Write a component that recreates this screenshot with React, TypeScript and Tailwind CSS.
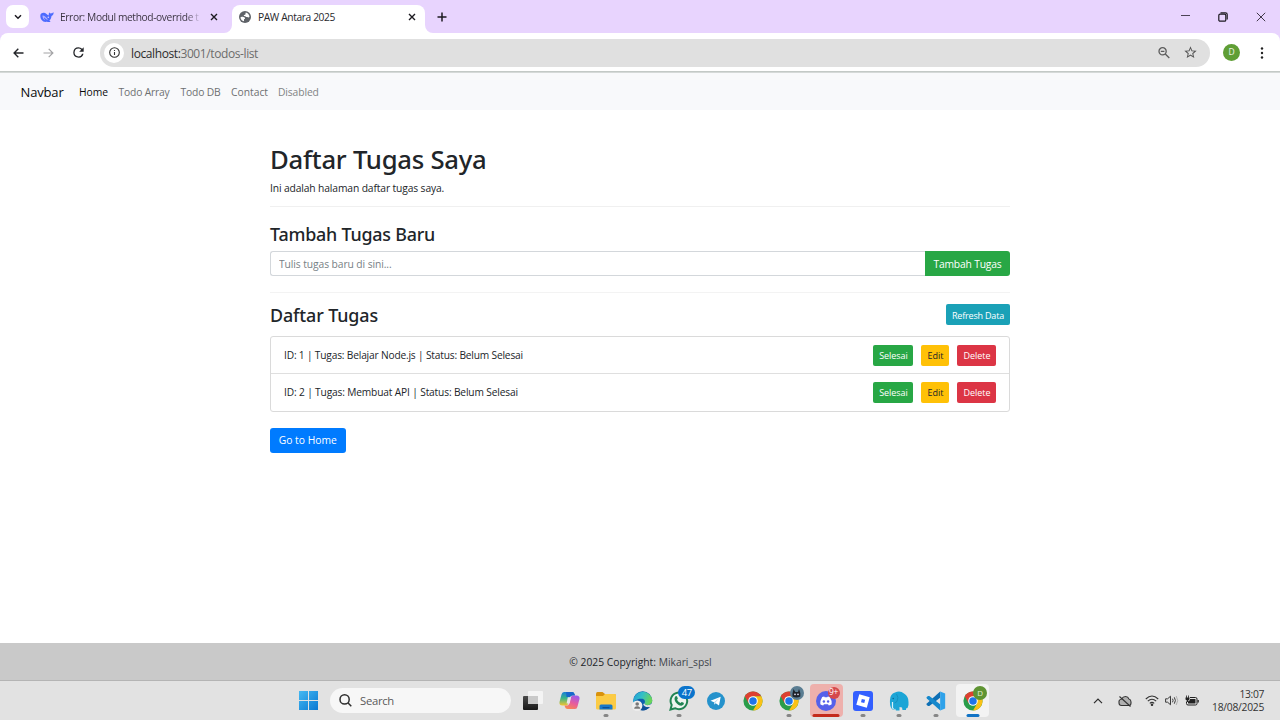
import type { ReactNode } from "react";

function ChromeLogo({ size = 20 }: { size?: number }) {
  return (
    <svg width={size} height={size} viewBox="0 0 48 48">
      <circle cx="24" cy="24" r="23" fill="#2a9d4a" />
      <path d="M4.1 12.5A23 23 0 0 1 43.9 12.5H24L14 29.8Z" fill="#dd4031" />
      <path d="M43.9 12.5A23 23 0 0 1 24 47L34 29.8 24 13V12.5Z" fill="#fbc116" />
      <circle cx="24" cy="24" r="11.5" fill="#fff" />
      <circle cx="24" cy="24" r="9" fill="#1f74e8" />
    </svg>
  );
}

function TaskItem({ children, mark, className = "" }: { children: ReactNode; mark?: string; className?: string }) {
  return (
    <div className={`relative flex h-[33px] w-[33px] items-center justify-center rounded-[4px] ${className}`}>
      {children}
      {mark && <span className={`absolute bottom-0 left-1/2 h-[3px] -translate-x-1/2 rounded-full ${mark}`} />}
    </div>
  );
}

const running = "w-[5px] bg-[#868686]";

function CloseIcon() {
  return (
    <svg width="8" height="8" viewBox="0 0 8 8" stroke="#1c1a20" strokeWidth="1.4">
      <path d="M1 1 7 7M7 1 1 7" />
    </svg>
  );
}

function TabBar() {
  return (
    <header className="flex h-[33px] items-start bg-[#e8d4fe]">
      <div className="ml-[6px] mt-[5px] flex h-[23px] w-[23px] items-center justify-center rounded-[7px] bg-white">
        <svg width="8" height="6" viewBox="0 0 8 6" fill="none" stroke="#1c1a20" strokeWidth="1.5">
          <path d="M1 1.2 4 4.2 7 1.2" />
        </svg>
      </div>
      <div className="ml-[11px] mt-[6px] flex h-[22px] w-[180px] items-center">
        <svg width="14" height="12" viewBox="0 0 14 12" fill="#4d6bfe">
          <path d="M.3 5C.2 2.6 2.2 1.5 4.2 1.8 6.3 2.1 7 3.7 8.4 4.6 9 4.3 8.5 2.5 9.3 1.3 9.7 2.6 10.6 2.5 11.5 2.3 12.5 2.1 12.9 1.5 13.6 1.2 13.7 3.3 12.8 4.5 11.5 4.9 11.3 7 10.5 8.4 9.4 9.4L10.6 10.8C9 11.5 7.5 10.6 6.5 10.8 2.8 11.5.4 8.2.3 5Z" />
          <path d="M2.5 4.5C4.5 4 6.5 6.5 8 8.8 6 8.3 5 7 4.2 6.4 3.6 7 4.5 8.5 5.5 9.2 3.5 9 2.3 6.5 2.5 4.5Z" fill="#b5b0ff" />
          <circle cx="8.3" cy="6.3" r=".8" fill="#dfd0ff" />
        </svg>
        <span className="ml-[6px] w-[140px] overflow-hidden whitespace-nowrap bg-linear-to-r from-[#38313f] from-90% to-[#38313f]/10 bg-clip-text pt-[1px] text-[10.25px] tracking-[-0.39px] text-transparent">
          Error: Modul method-override t
        </span>
        <span className="ml-[9.5px] flex"><CloseIcon /></span>
      </div>
      <div className="relative ml-[12px] mt-[5px] flex h-[28px] w-[193px] items-center rounded-t-[8px] bg-white px-[7px] pb-[4px]">
        <svg className="absolute bottom-0 -left-[8px]" width="8" height="8" viewBox="0 0 8 8" fill="#fff"><path d="M8 0V8H0A8 8 0 0 0 8 0Z" /></svg>
        <svg className="absolute bottom-0 -right-[8px]" width="8" height="8" viewBox="0 0 8 8" fill="#fff"><path d="M0 0V8H8A8 8 0 0 1 0 0Z" /></svg>
        <svg width="12" height="12" viewBox="0 0 24 24">
          <circle cx="12" cy="12" r="12" fill="#5f6368" />
          <path d="M3 12.5C4 11 7 11 9 12 11 12.5 12.5 13.5 12 15.5L10 16.5V20.5C6 20 3 17 3 12.5ZM13.5 3.2C17.5 3.8 20.8 7.5 21 11.5 20 13.5 18 13 16.5 12L14.5 12 12.5 10.5 10 10 9.5 8 12.5 7.5Z" fill="#fff" />
        </svg>
        <span className="ml-[7px] flex-1 whitespace-nowrap pt-[1px] text-[10.25px] tracking-[-0.39px] text-[#28282c]">PAW Antara 2025</span>
        <span className="mr-[2px] flex"><CloseIcon /></span>
      </div>
      <svg className="ml-[12px] mt-[12px]" width="10" height="10" viewBox="0 0 10 10" stroke="#1c1a20" strokeWidth="1.5"><path d="M5 .5V9.5M.5 5H9.5" /></svg>
      <div className="ml-auto mr-[14px] flex h-[33px] items-center gap-[28px]">
        <svg className="-mt-[2px]" width="9" height="9" viewBox="0 0 9 9" stroke="#4c4355" strokeWidth="1"><path d="M0 4.5H9" /></svg>
        <svg width="10" height="10" viewBox="0 0 10 10" fill="none" stroke="#1c1a20" strokeWidth="1.2">
          <rect x=".8" y="2.2" width="7" height="7" rx="1.3" />
          <path d="M2.5 .8H7.5Q9.2 .8 9.2 2.5V7.5" />
        </svg>
        <svg width="10" height="10" viewBox="0 0 10 10" stroke="#2c2633" strokeWidth=".9"><path d="M.8 .8 9.2 9.2M9.2 .8 .8 9.2" /></svg>
      </div>
    </header>
  );
}

function Toolbar() {
  return (
    <div className="bg-[#e8d4fe]">
      <div className="flex h-[39px] items-center rounded-t-[8px] border-b border-[#c3c9c6] bg-white pl-[13px] pr-[16px] pt-[1px]">
        <svg width="11" height="10" viewBox="0 0 11 10" fill="none" stroke="#24262a" strokeWidth="1.4"><path d="M10.5 5H1.3M5.3 .8 1.1 5 5.3 9.2" /></svg>
        <svg className="ml-[19px]" width="11" height="10" viewBox="0 0 11 10" fill="none" stroke="#a3a3a5" strokeWidth="1.2"><path d="M.5 5H9.7M5.7 .8 9.9 5 5.7 9.2" /></svg>
        <svg className="ml-[19px]" width="11" height="11" viewBox="3.5 3.5 17 17" fill="#24262a"><path d="M17.65 6.35A7.96 7.96 0 0 0 12 4a8 8 0 1 0 7.73 10h-2.08A6 6 0 1 1 12 6c1.66 0 3.14.69 4.22 1.78L13 11h7V4z" /></svg>
        <div className="ml-[16px] flex h-[28px] flex-1 items-center rounded-full bg-[#e0e0e0] pl-[4px] pr-[13px]">
          <div className="flex h-[20px] w-[20px] items-center justify-center rounded-full bg-white">
            <svg width="11" height="11" viewBox="0 0 11 11" fill="none" stroke="#333" strokeWidth="1.1"><circle cx="5.5" cy="5.5" r="4.8" /><path d="M5.5 4.9V8M5.5 2.9V4" /></svg>
          </div>
          <p className="ml-[7px] flex-1 whitespace-nowrap pt-[2px] text-[12px] tracking-[-0.4px] text-[#6c6c6c]"><span className="text-[#2c2c2c]">localhost:</span>3001/todos-list</p>
          <svg width="12" height="12" viewBox="0 0 12 12" fill="none" stroke="#5c5c5c" strokeWidth="1.3"><circle cx="4.6" cy="4.3" r="3.6" /><path d="M7.3 7 11.3 11M2.8 4.3H6.4" /></svg>
          <svg className="ml-[14px]" width="13" height="13" viewBox="1.5 1.5 21 21" fill="#565656"><path d="M22 9.24l-7.19-.62L12 2 9.19 8.63 2 9.24l5.46 4.73L5.82 21 12 17.27 18.18 21l-1.63-7.03L22 9.24zM12 15.4l-3.76 2.27 1-4.28-3.32-2.88 4.38-.38L12 6.1l1.71 4.04 4.38.38-3.32 2.88 1 4.28L12 15.4z" /></svg>
        </div>
        <div className="ml-[13px] flex h-[17px] w-[17px] items-center justify-center rounded-full bg-[#5f9e35] text-[8.5px] text-white/90">D</div>
        <svg className="ml-[20px]" width="4" height="12" viewBox="0 0 4 12" fill="#222"><circle cx="2" cy="1.5" r="1.2" /><circle cx="2" cy="6" r="1.2" /><circle cx="2" cy="10.5" r="1.2" /></svg>
      </div>
    </div>
  );
}

function Navbar() {
  return (
    <nav className="flex h-[38px] items-center whitespace-nowrap border-t border-[#d5d9d8] bg-[#f8f9fb] pl-[20.5px] pt-[2px] text-[10.3px] text-[#6e7072]">
      <span className="w-[58.5px] text-[13px] tracking-[-0.16px] text-[#0a0b0c]">Navbar</span>
      <span className="w-[39.5px] text-[#0a0b0c]">Home</span>
      <span className="w-[62px] tracking-[-0.18px]">Todo Array</span>
      <span className="w-[50.5px] tracking-[-0.16px]">Todo DB</span>
      <span className="w-[47px]">Contact</span>
      <span className="tracking-[-0.12px] text-[#828485]">Disabled</span>
    </nav>
  );
}

function TodoRow({ children }: { children: ReactNode }) {
  return (
    <li className="flex h-[36px] items-center border-[#dfdfdf] px-[13px] not-first:h-[38px] not-first:border-t">
      {children}
      <div className="ml-auto flex h-[21px] gap-[8px] text-[9px] leading-[22px]">
        <button className="w-[40px] rounded-[2px] bg-[#28a745] pl-[1px] tracking-[-0.05px] text-white">Selesai</button>
        <button className="w-[28px] rounded-[2px] bg-[#ffc107] pl-[1px] text-[#212529]">Edit</button>
        <button className="w-[39px] rounded-[2px] bg-[#dc3545] pl-[1px] text-white">Delete</button>
      </div>
    </li>
  );
}

function Page() {
  return (
    <main className="mx-auto w-[740px] flex-1 pt-[34px] text-[10.3px] text-[#212529]">
      <h1 className="font-['Noto_Sans'] text-[25.7px] font-medium leading-[32px] tracking-[-0.26px]">Daftar Tugas Saya</h1>
      <p className="mt-[4px] leading-[16px] tracking-[-0.13px]">Ini adalah halaman daftar tugas saya.</p>
      <hr className="mt-[10px] border-[#f0f0f0]" />
      <h3 className="mt-[16px] font-['Noto_Sans'] text-[17.9px] font-medium leading-[22px] tracking-[-0.22px]">Tambah Tugas Baru</h3>
      <form className="mt-[6px] flex h-[25px]">
        <input className="min-w-0 flex-1 rounded-l-[3px] border border-r-0 border-[#d3d7db] pl-[8px] pt-[2px] tracking-[-0.09px] placeholder:text-[#787f85]" placeholder="Tulis tugas baru di sini..." />
        <button type="button" className="w-[85px] rounded-r-[3px] bg-[#28a745] pt-[2px] tracking-[-0.17px] text-white">Tambah Tugas</button>
      </form>
      <hr className="mt-[16px] border-[#f3f3f3]" />
      <div className="mt-[11px] flex h-[21px] items-center justify-between">
        <h3 className="font-['Noto_Sans'] text-[17.9px] font-medium leading-[22px] tracking-[-0.12px]">Daftar Tugas</h3>
        <button className="h-[21px] w-[64px] rounded-[2px] bg-[#1aa1b7] pt-[2px] text-[9px] tracking-[-0.18px] text-white">Refresh Data</button>
      </div>
      <ul className="mt-[11px] rounded-[3px] border border-[#dadada]">
        <TodoRow><span className="pt-[2px] text-[10.2px] tracking-[-0.18px]">ID: 1 | Tugas: Belajar Node.js | Status: Belum Selesai</span></TodoRow>
        <TodoRow><span className="pt-[1px] text-[10.2px] tracking-[-0.15px]">ID: 2 | Tugas: Membuat API | Status: Belum Selesai</span></TodoRow>
      </ul>
      <button className="mt-[16px] h-[25px] w-[75.5px] rounded-[3px] bg-[#007bff] pt-[1px] text-white">Go to Home</button>
    </main>
  );
}

function Taskbar() {
  return (
    <div className="flex h-[40px] items-center border-t border-[#b4b4b4] bg-[#e2e2e2] pl-[299px] pr-[16px]">
      <svg width="19" height="19" viewBox="0 0 19 19">
        <defs><linearGradient id="win" x1="0" y1="0" x2="1" y2="1"><stop stopColor="#45b9f2" /><stop offset="1" stopColor="#0a78d2" /></linearGradient></defs>
        <path d="M0 0H9V9H0ZM10 0H19V9H10ZM0 10H9V19H0ZM10 10H19V19H10Z" fill="url(#win)" />
      </svg>
      <div className="ml-[12px] flex h-[25px] w-[181px] items-center rounded-full bg-[#f7f7f7] pl-[9px]">
        <svg width="13" height="13" viewBox="0 0 13 13" fill="none" stroke="#2e2e2e" strokeWidth="1.5"><circle cx="5.6" cy="5.4" r="4.6" /><path d="M8.9 8.8 12.3 12.2" /></svg>
        <span className="ml-[8px] pt-[1px] text-[11.3px] tracking-[-0.3px] text-[#5a5a5a]">Search</span>
      </div>
      <div className="ml-[5px] flex gap-[3.7px]">
        <TaskItem>
          <svg width="20" height="19" viewBox="0 0 20 19">
            <defs><linearGradient id="tv" x1="0" y1="0" x2="0" y2="1"><stop stopColor="#4a4a4a" /><stop offset="1" stopColor="#181818" /></linearGradient></defs>
            <rect x="0" y="5" width="15" height="14" rx="1" fill="url(#tv)" />
            <rect x="5" y="0" width="15" height="13" rx="1" fill="#f4f4f4" />
            <rect x="5" y="5" width="10" height="8" fill="#c9c9c9" />
          </svg>
        </TaskItem>
        <TaskItem>
          <svg width="21" height="19" viewBox="0 0 21 19">
            <defs>
              <linearGradient id="cp1" x1="0" y1="0" x2="0" y2="1"><stop stopColor="#1a7fd8" /><stop offset=".45" stopColor="#38b58b" /><stop offset="1" stopColor="#f4c430" /></linearGradient>
              <linearGradient id="cp2" x1=".6" y1="0" x2=".2" y2="1"><stop stopColor="#a05ce8" /><stop offset=".5" stopColor="#e85c9c" /><stop offset="1" stopColor="#f98a50" /></linearGradient>
            </defs>
            <path d="M5 1H13Q15 1 15.5 3L16 4.5H13Q11.5 4.5 11 6L9 13Q8.5 14.5 7 14.5H3.5Q0 14.5 .5 11L2.5 3.5Q3 1 5 1Z" fill="url(#cp1)" />
            <path d="M7 1H13Q15 1 15.5 3L16 4.5H13Q11.5 4.5 11 6H7.5Z" fill="#1868cc" />
            <path d="M16 18H8.5Q6.5 18 6 16L5.5 14.5H8Q9.5 14.5 10 13L12 6Q12.5 4.5 14 4.5H17.5Q21 4.5 20.5 8L18.5 15.5Q18 18 16 18Z" fill="url(#cp2)" />
            <path d="M8.8 6.2H12L10.7 12.5H7.6Z" fill="#e8e6ea" />
          </svg>
        </TaskItem>
        <TaskItem mark={running}>
          <svg width="20" height="18" viewBox="0 0 20 18">
            <path d="M0 2Q0 0 1.5 0H6.5L9 2H18.5Q20 2 20 3.5V8H0Z" fill="#d9920d" />
            <path d="M0 4H7L9 2H18.5Q20 2 20 3.5V16Q20 17.5 18.5 17.5H1.5Q0 17.5 0 16Z" fill="#fbcb45" />
            <path d="M3.5 17.5V14Q3.5 12.5 5 12.5H15Q16.5 12.5 16.5 14V17.5Z" fill="#1879c8" />
            <path d="M6.5 15H13.5V16.3H6.5Z" fill="#0d4f93" />
          </svg>
        </TaskItem>
        <TaskItem>
          <svg width="21" height="20" viewBox="0 0 21 20">
            <defs>
              <linearGradient id="ed" x1="0" y1="0" x2="1" y2=".3"><stop stopColor="#219bd8" /><stop offset=".5" stopColor="#33bfc7" /><stop offset="1" stopColor="#68d45c" /></linearGradient>
            </defs>
            <circle cx="10.7" cy="9.7" r="9.5" fill="#0d5fae" />
            <path d="M1.2 10A9.6 9.6 0 0 1 20.3 9C20.5 12.5 17.5 14.2 15 14 12.8 13.8 12 12.8 12.8 11.5 13.5 9.5 12 7.8 9.5 7.8 5 7.5 2 10 1.2 13Z" fill="url(#ed)" />
            <path d="M12.5 12.5C13 14.5 17 15 20.5 12L21 16 18 16.2C14 16.8 11.5 15 11.2 13Z" fill="#e2e2e2" />
            <path d="M9.5 9.5C8 12.5 10 17.5 17.8 16A9.5 9.5 0 0 1 7 18.5Z" fill="#0f4f96" />
            <circle cx="5.2" cy="14.8" r="5.2" fill="#ededed" />
            <circle cx="5.2" cy="13" r="1.8" fill="#777" /><path d="M2.2 17.8Q2.2 15.2 5.2 15.2T8.2 17.8Z" fill="#777" />
          </svg>
        </TaskItem>
        <TaskItem mark={running}>
          <svg width="20" height="20" viewBox="0 0 20 20">
            <path d="M1.5 18.5 2.7 14A8.3 8.3 0 1 1 6 17.2Z" fill="#eef4f0" stroke="#218453" strokeWidth="2" />
            <path d="M6.5 5.3Q7.5 4.7 8 5.5L8.8 7.3Q8.9 8 8 8.7 9.2 11 11.6 12 12.5 10.9 13 11.1L15 12.1Q15 14.5 12.5 14.7 9 14.5 6.5 11 4.5 7.5 6.5 5.3Z" fill="#218453" />
          </svg>
          <span className="absolute right-[0.5px] top-[2px] flex h-[13px] w-[17px] items-center justify-center rounded-full bg-[#0a74cc] text-[9.5px] leading-none tracking-[-0.5px] text-white">47</span>
        </TaskItem>
        <TaskItem>
          <svg width="18" height="18" viewBox="0 0 18 18"><circle cx="9" cy="9" r="9" fill="#2592cc" /><path d="M3.5 8.8 13.7 4.7 12 13.5 8.7 11.2 7.2 12.6 7 10.2Z" fill="#fff" /><path d="M7 10.2 12 6.3 8.3 10.8 7.2 12.6Z" fill="#b5d6ec" /></svg>
        </TaskItem>
        <TaskItem><ChromeLogo /></TaskItem>
        <TaskItem mark={running}>
          <ChromeLogo />
          <svg className="absolute right-[2px] top-[2px]" width="14" height="14" viewBox="0 0 14 14">
            <circle cx="7" cy="7" r="7" fill="#5a7d92" />
            <path d="M2.500 10.500V7.500L3.500 3 5.300 6H8L9 3 10.300 7V10.500Q6.500 12.500 2.500 10.500Z" fill="#1d2228" />
            <circle cx="5" cy="8.3" r=".9" fill="#dde" /><circle cx="8" cy="8.3" r=".9" fill="#dde" />
          </svg>
        </TaskItem>
        <TaskItem className="bg-[#eeb0ac]" mark="w-[27px] bg-[#c42b1c]">
          <svg width="20" height="20" viewBox="0 0 20 20"><circle cx="10" cy="10" r="10" fill="#5661ea" /><path d="M6.2 6 8.2 5.5 8.7 6.3H11.3L11.8 5.5 13.8 6Q16 9.5 15.7 13.2 14.5 14.2 12.8 14.5L12 13.2H8L7.2 14.5Q5.5 14.2 4.3 13.2 4 9.5 6.2 6Z" fill="#fff" /><ellipse cx="7.9" cy="10.5" rx="1.2" ry="1.3" fill="#5661ea" /><ellipse cx="12.1" cy="10.5" rx="1.2" ry="1.3" fill="#5661ea" /></svg>
          <span className="absolute right-[3px] top-[2.5px] flex h-[12px] w-[12px] items-center justify-center rounded-full bg-[#d5484c] text-[8.5px] leading-none tracking-[-0.3px] text-white">9+</span>
        </TaskItem>
        <TaskItem mark={running}>
          <svg width="20" height="20" viewBox="0 0 20 20"><rect width="20" height="20" rx="3" fill="#335fff" /><path d="M6.3 3.3 16.7 6.2 13.8 16.7 3.3 13.8ZM8.8 7.9 8 11.2 11.3 12.1 12.1 8.8Z" fill="#fff" fillRule="evenodd" /></svg>
        </TaskItem>
        <TaskItem mark={running}>
          <svg width="20" height="20" viewBox="0 0 20 20">
            <path d="M1 9Q1 3 6 1.5 11 -1 15 2.5 19.5 5 19.5 11V14L18.5 17 17 17.5V19H13.5L13 16.5 10.5 16V19.5H7L6 17.5 5.5 18.5H3.5Q.5 16 1 9Z" fill="#1ca5d6" />
            <path d="M3.5 11V16.5Q3.7 17.8 4.7 17.5" fill="none" stroke="#d8f1f8" strokeWidth="1.2" /><path d="M7.5 3Q10 6 8 10.5L5.5 12" fill="none" stroke="#158bb8" strokeWidth=".8" /><circle cx="4.2" cy="7.5" r=".7" fill="#0d5f85" />
          </svg>
        </TaskItem>
        <TaskItem mark={running}>
          <svg width="20" height="20" viewBox="0 0 24 24">
            <path d="M17 .5V8L4 18H2.5L.5 16.5 1 15Z" fill="#0d6fb5" />
            <path d="M17 23.5V16L4 6H2.5L.5 7.5 1 9Z" fill="#1688cc" />
            <path d="M17 .5 23 3V21L17 23.5Z" fill="#2fa2ea" />
          </svg>
        </TaskItem>
        <TaskItem className="bg-[#f3f3f3]" mark="w-[13px] bg-[#1173c5]">
          <ChromeLogo />
          <span className="absolute right-[2px] top-[2px] flex h-[14px] w-[14px] items-center justify-center rounded-full bg-[#5f9433] text-[8px] leading-none text-[#e2eed6]">D</span>
        </TaskItem>
      </div>
      <svg className="ml-auto" width="10" height="6" viewBox="0 0 10 6" fill="none" stroke="#2c2c2c" strokeWidth="1.2"><path d="M1 5.2 5 1.2 9 5.2" /></svg>
      <svg className="ml-[15px]" width="14" height="12" viewBox="0 0 14 12" fill="none" stroke="#333" strokeWidth="1.1">
        <path d="M3.5 10.5Q1 10.5 1 8V6Q1.5 4.500 3.500 4 5 1.500 7.500 1.500 10 1.500 11 4 13 4.500 13 7V8Q13 10.500 11 10.500Z" fill="#b0b0b0" /><path d="M1.5 1.5 12.5 11.5" />
      </svg>
      <svg className="ml-[13px]" width="14" height="11" viewBox="0 0 14 11" fill="none" stroke="#333" strokeWidth="1.1">
        <path d="M.8 4Q7 -2 13.2 4M2.8 6.2Q7 2.3 11.2 6.2M4.8 8.3Q7 6.3 9.2 8.3" /><circle cx="7" cy="9.8" r=".7" fill="#333" />
      </svg>
      <svg className="ml-[6px]" width="14" height="11" viewBox="0 0 14 11" fill="none" stroke="#3a3a3a" strokeWidth="1">
        <path d="M.6 3.8H2.6L5.5 1.2V9.8L2.6 7.2H.6ZM7.5 3.7Q8.7 5.5 7.5 7.3M9.3 2.3Q11.5 5.5 9.3 8.7" /><path d="M11.2 1Q14.2 5.5 11.2 10" stroke="#b0b0b0" />
      </svg>
      <svg className="ml-[6px]" width="14" height="11" viewBox="0 0 14 11">
        <rect x="1.5" y="2.5" width="10.5" height="7.5" rx="1.5" fill="none" stroke="#222" />
        <rect x="3" y="4" width="7.5" height="4.5" rx=".5" fill="#222" />
        <path d="M12.5 5H13.8V7.5H12.5Z" fill="#222" />
        <path d="M0 0H5V5L3 6.5H0Z" fill="#e2e2e2" />
        <path d="M.5 2.5H4.5V4.5L3 5.8V7H2V5.8L.5 4.5ZM1.2 .5H2V2.5H1.2ZM3 .5H3.8V2.5H3Z" fill="#222" />
      </svg>
      <div className="ml-[13px] w-[52px] whitespace-nowrap text-right text-[10.3px] leading-[13px] text-[#333]">
        <p className="tracking-[-0.35px]">13:07</p>
        <p className="tracking-[-0.27px]">18/08/2025</p>
      </div>
    </div>
  );
}

export default function App() {
  return (
    <div className="flex h-[720px] w-[1280px] flex-col overflow-hidden bg-white font-['Open_Sans','Noto_Sans',sans-serif]">
      <TabBar />
      <Toolbar />
      <Navbar />
      <Page />
      <footer className="flex h-[37px] items-center justify-center bg-[#c9c9c9] pl-[1px] pt-[3px] text-[10.3px] text-[#212529]">
        <p>© 2025 Copyright: <span className="text-[#40444a]">Mikari_spsl</span></p>
      </footer>
      <Taskbar />
    </div>
  );
}
